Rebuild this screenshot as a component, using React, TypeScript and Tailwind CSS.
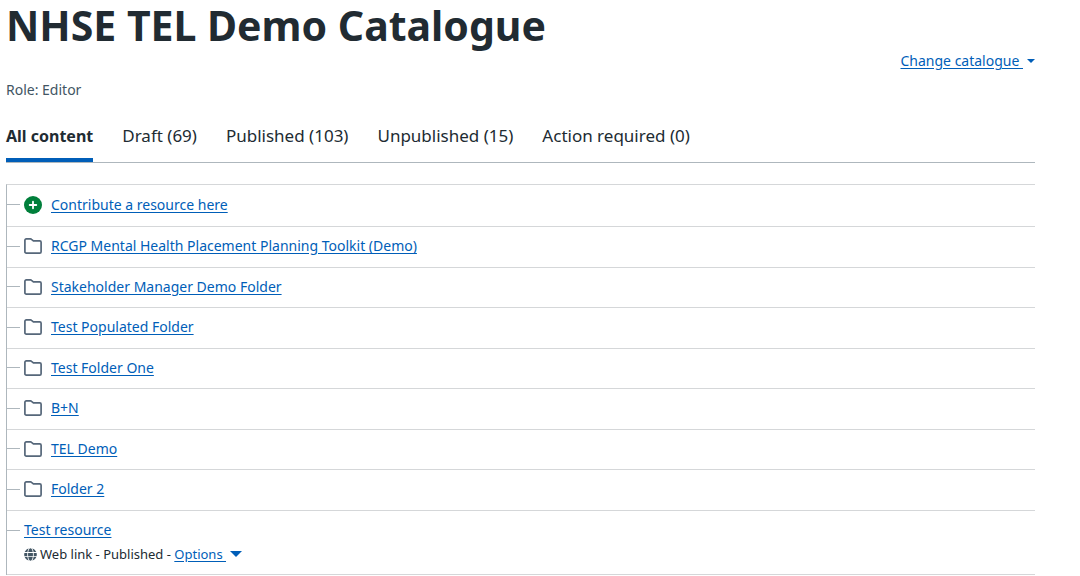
import React from 'react';
import { FaGlobe } from 'react-icons/fa';

const tabs = [
  { label: 'All content', active: true },
  { label: 'Draft (69)' },
  { label: 'Published (103)' },
  { label: 'Unpublished (15)' },
  { label: 'Action required (0)' },
];

const folders = [
  'RCGP Mental Health Placement Planning Toolkit (Demo)',
  'Stakeholder Manager Demo Folder',
  'Test Populated Folder',
  'Test Folder One',
  'B+N',
  'TEL Demo',
  'Folder 2',
];

const FolderIcon = () => (
  <svg viewBox="0 0 18 16" className="h-4 w-[18px] shrink-0" fill="none" stroke="#56677a" strokeWidth="1.7" strokeLinejoin="round" aria-hidden="true">
    <path d="M2.3 0.9h4.2c.4 0 .7.1 1 .4l1.6 1.3c.2.2.5.3.8.3h5.8c.8 0 1.4.6 1.4 1.4v9.4c0 .8-.6 1.4-1.4 1.4H2.3c-.8 0-1.4-.6-1.4-1.4V2.3C.9 1.5 1.5.9 2.3.9z" />
  </svg>
);

const PlusIcon = () => (
  <svg viewBox="0 0 18 18" className="size-[18px] shrink-0" aria-hidden="true">
    <circle cx="9" cy="9" r="9" fill="#007f3b" />
    <path d="M9 5.7v6.6M5.7 9h6.6" stroke="#fff" strokeWidth="1.8" strokeLinecap="round" />
  </svg>
);

// Branch line that joins a row to the tree
const Branch = () => <span className="mr-1 h-px w-[13px] shrink-0 bg-[#aeb7bd]" />;

export default function App() {
  return (
    <main className="bg-white pr-[45px] pl-1.5 font-['Noto_Sans',sans-serif] text-[#212b32]">
      <header>
        <h1 className="text-[41px] leading-[50px] font-bold">NHSE TEL Demo Catalogue</h1>
        <div className="mt-px flex justify-end">
          <button type="button" className="flex items-center gap-1 text-sm leading-5 text-[#005eb8]">
            <span className="whitespace-pre underline underline-offset-2">Change catalogue </span>
            <svg viewBox="0 0 8 4" className="h-1 w-2" fill="currentColor" aria-hidden="true">
              <path d="M0 0h8L4 4z" />
            </svg>
          </button>
        </div>
        <p className="mt-[9px] text-sm leading-5 text-[#425563]">Role: Editor</p>
      </header>

      <nav className="mt-6 flex gap-[29px] border-b border-[#aeb7bd]">
        {tabs.map((tab) => (
          <a
            key={tab.label}
            href="#"
            className={
              tab.active
                ? 'border-b-4 border-[#005eb8] pb-2.5 text-base leading-6 font-bold'
                : 'border-b-4 border-transparent pb-2.5 text-[17px] leading-6'
            }
          >
            {tab.label}
          </a>
        ))}
      </nav>

      <ul className="mt-[21px] border-t border-l border-t-[#d5d7d9] border-l-[#aeb7bd] text-sm leading-5">
        <li className="flex h-[42px] items-center border-b border-[#d5d7d9] pb-0.5">
          <Branch />
          <PlusIcon />
          <a href="#" className="ml-[9px] text-[#005eb8] underline underline-offset-2">Contribute a resource here</a>
        </li>
        {folders.map((name) => (
          <li key={name} className="flex h-10 items-center border-b border-[#d5d7d9] pb-0.5 even:h-[41px]">
            <Branch />
            <FolderIcon />
            <a href="#" className="ml-[9px] text-[#005eb8] underline underline-offset-2">{name}</a>
          </li>
        ))}
        <li className="border-b border-[#d5d7d9] pt-[9px] pb-2.5">
          <div className="flex items-center">
            <Branch />
            <a href="#" className="text-[#005eb8] underline underline-offset-2">Test resource</a>
          </div>
          <div className="mt-1 flex items-center pl-[17px] text-[13px] leading-5">
            <FaGlobe className="mr-[3px] size-[13px] text-[#425563]" />
            <span className="whitespace-pre">Web link - Published - </span>
            <button type="button" className="flex items-center gap-1 text-[#005eb8]">
              <span className="whitespace-pre underline underline-offset-2">Options </span>
              <svg viewBox="0 0 12 6" className="h-1.5 w-3" fill="currentColor" aria-hidden="true">
                <path d="M0 0h12L6 6z" />
              </svg>
            </button>
          </div>
        </li>
      </ul>
    </main>
  );
}
